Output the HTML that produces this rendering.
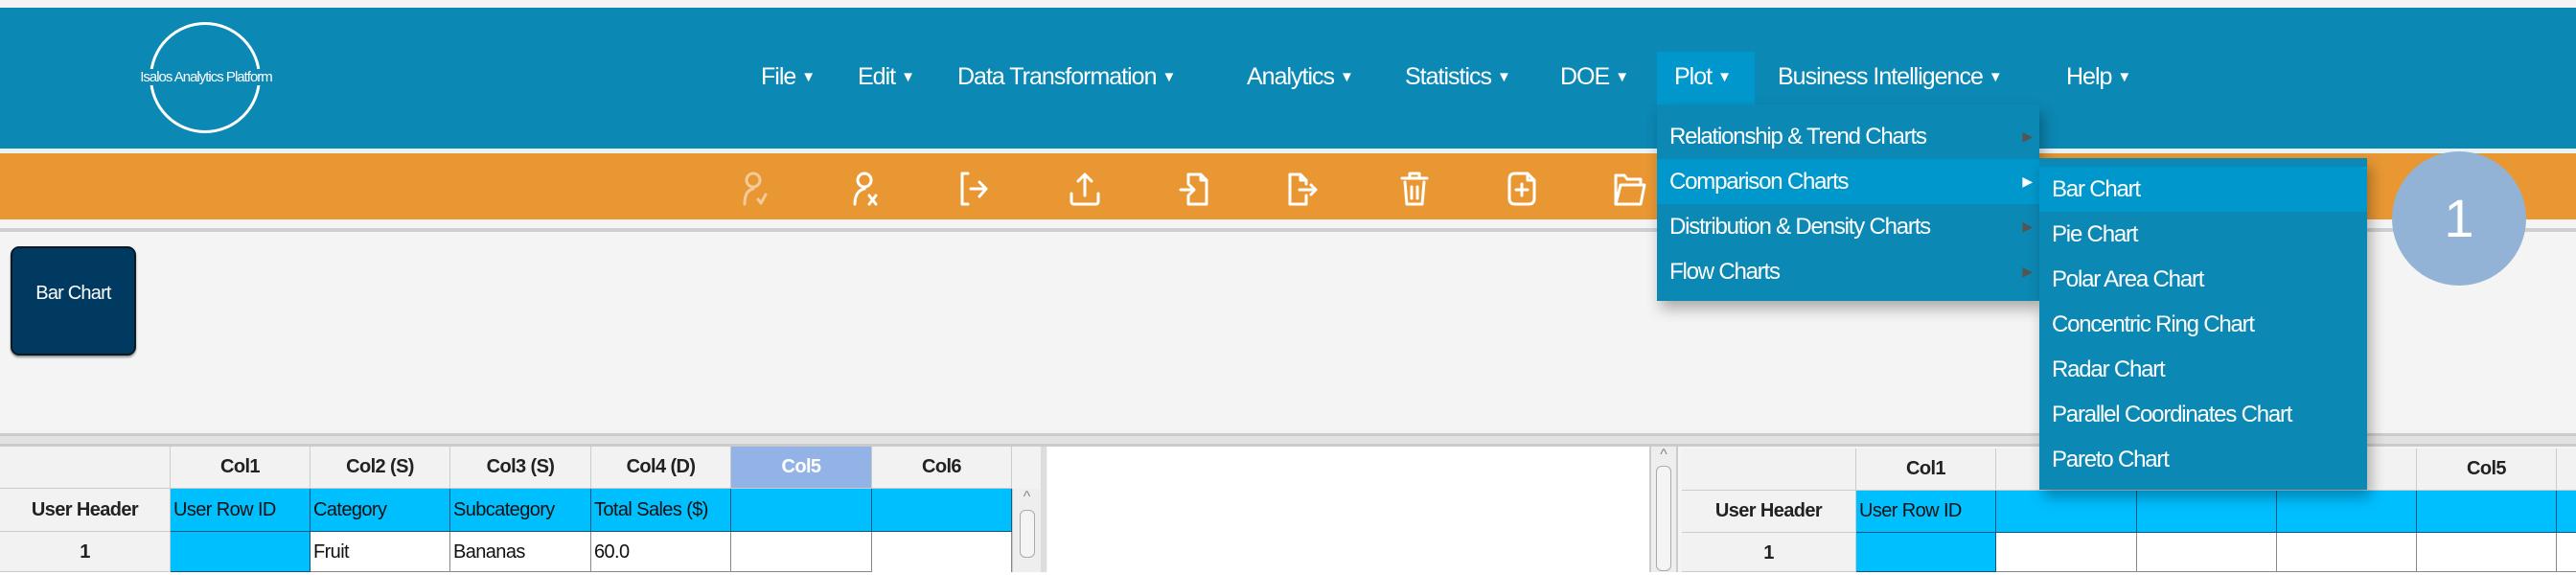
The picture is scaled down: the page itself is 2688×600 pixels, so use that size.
<!DOCTYPE html>
<html><head><meta charset="utf-8"><style>
*{margin:0;padding:0;box-sizing:border-box}
body{width:2688px;height:600px;overflow:hidden;background:#f4f4f4;font-family:"Liberation Sans",sans-serif;position:relative}
.abs{position:absolute}
.hdr{left:0;top:8px;width:2688px;height:147px;background:#0c88b5}
.menu{top:66px;color:#fff;font-size:25px;letter-spacing:-1px;white-space:nowrap}
.menu small{font-size:15px;vertical-align:3px;margin-left:6px}
.orange{left:0;top:160px;width:2688px;height:69px;background:#e89733}
.dd{background:#0c88b5;box-shadow:4px 8px 14px rgba(0,0,0,.3)}
.it{position:absolute;left:0;right:0;height:47px;line-height:47px;color:#fff;font-size:24px;letter-spacing:-1.2px;padding-left:13px;white-space:nowrap}
.it .ar{position:absolute;right:8px;top:0;font-size:14px;color:#555}
.cell{position:absolute;border-right:1px solid #ccc;border-bottom:1px solid #ccc;font-size:20px;letter-spacing:-0.6px;line-height:42px;overflow:hidden;white-space:nowrap}
.h{background:#f2f2f2;text-align:center;font-weight:bold;color:#222}
.c{background:#00bfff;border-color:#0a5a80;color:#111;padding-left:3px}
.w{background:#fff;border-color:#888;color:#111;padding-left:3px}
svg.i{position:absolute;top:178px;width:38px;height:38px;fill:none;stroke:#fff;stroke-width:3;stroke-linecap:round;stroke-linejoin:round}
</style></head><body>
<div class="abs hdr"></div>
<div class="abs" style="left:156px;top:23px;width:116px;height:116px;border:3px solid #fff;border-radius:50%"></div>
<div class="abs" style="left:110px;top:70px;width:210px;text-align:center;color:#fff;font-size:15px;letter-spacing:-1px;line-height:22px"><span style="background:#0c88b5;padding:0 2px">Isalos Analytics Platform</span></div>
<div class="abs" style="left:1729px;top:54px;width:102px;height:55px;background:#0098cc"></div>
<div class="abs menu" style="left:794px">File<small>▼</small></div>
<div class="abs menu" style="left:895px">Edit<small>▼</small></div>
<div class="abs menu" style="left:999px">Data Transformation<small>▼</small></div>
<div class="abs menu" style="left:1301px">Analytics<small>▼</small></div>
<div class="abs menu" style="left:1466px">Statistics<small>▼</small></div>
<div class="abs menu" style="left:1628px">DOE<small>▼</small></div>
<div class="abs menu" style="left:1747px">Plot<small>▼</small></div>
<div class="abs menu" style="left:1855px">Business Intelligence<small>▼</small></div>
<div class="abs menu" style="left:2156px">Help<small>▼</small></div>
<div class="abs" style="left:0;top:155px;width:2688px;height:5px;background:#e8f2f7"></div>
<div class="abs orange"></div>
<div class="abs" style="left:0;top:238px;width:2688px;height:4px;background:#cfcfcf"></div>
<svg class="i" style="left:769px;opacity:.5" viewBox="0 0 38 38"><circle cx="17" cy="10" r="7"/><path d="M8 35 C8 24 12 20 17 19 M22 30 l3 4 l5 -9"/></svg>
<svg class="i" style="left:885px" viewBox="0 0 38 38"><circle cx="17" cy="10" r="7"/><path d="M7 35 C7 24 12 20 17 19 M22 26 l7 9 M29 26 l-7 9"/></svg>
<svg class="i" style="left:997px" viewBox="0 0 38 38"><path d="M13 3 H7 V35 H13 M16 19 H31 M25 12 L32 19 L25 27"/></svg>
<svg class="i" style="left:1113px" viewBox="0 0 38 38"><path d="M19 26 V4 M12 11 L19 4 L26 11 M5 24 V32 Q5 35 8 35 H30 Q33 35 33 32 V24"/></svg>
<svg class="i" style="left:1228px" viewBox="0 0 38 38"><path d="M12 14 V4 H25 L31 10 V35 H12 V26 M25 4 V10 H31 M4 20 H18 M13 15 L18 20 L13 25"/></svg>
<svg class="i" style="left:1341px" viewBox="0 0 38 38"><path d="M22 14 V10 L16 4 H5 V35 H22 V26 M16 4 V10 H22 M15 20 H32 M27 15 L32 20 L27 25"/></svg>
<svg class="i" style="left:1457px" viewBox="0 0 38 38"><path d="M6 8 H32 M14 8 V3 H24 V8 M9 12 L11 35 H27 L29 12 M16 17 V29 M22 17 V29"/></svg>
<svg class="i" style="left:1569px" viewBox="0 0 38 38"><path d="M6 9 Q6 3 12 3 H25 L32 10 V29 Q32 35 26 35 H12 Q6 35 6 29 Z M25 3 V10 H32 M19 14 V26 M13 20 H25"/></svg>
<svg class="i" style="left:1682px" viewBox="0 0 38 38"><path d="M4 35 V5 H13 L16 9 H30 V15 M4 35 L9 15 H34 L30 35 Z"/></svg>
<div class="abs" style="left:11px;top:257px;width:131px;height:114px;background:#003a60;border:2px solid #0a1a25;border-radius:9px;box-shadow:0 2px 2px rgba(0,0,0,.4);color:#fff;font-size:20px;letter-spacing:-0.8px;text-align:center;padding-top:36px">Bar Chart</div>
<div class="abs" style="left:0;top:452px;width:2688px;height:14px;background:#e2e2e2;border-top:3px solid #cbcbcb;border-bottom:3px solid #cbcbcb"></div>
<div class="abs" style="left:0;top:466px;width:1086px;height:134px;background:#f2f2f2"></div>
<div class="cell h" style="left:0;top:466px;width:178px;height:44px"></div>
<div class="cell h" style="left:178px;top:466px;width:146px;height:44px">Col1</div>
<div class="cell h" style="left:324px;top:466px;width:146px;height:44px">Col2 (S)</div>
<div class="cell h" style="left:470px;top:466px;width:147px;height:44px">Col3 (S)</div>
<div class="cell h" style="left:617px;top:466px;width:146px;height:44px">Col4 (D)</div>
<div class="cell h" style="left:763px;top:466px;width:147px;height:44px;background:#93b3e6;color:#fff">Col5</div>
<div class="cell h" style="left:910px;top:466px;width:146px;height:44px">Col6</div>
<div class="cell h" style="left:0;top:510px;width:178px;height:45px;line-height:45px">User Header</div>
<div class="cell c" style="left:178px;top:510px;width:146px;height:45px;line-height:45px">User Row ID</div>
<div class="cell c" style="left:324px;top:510px;width:146px;height:45px;line-height:45px">Category</div>
<div class="cell c" style="left:470px;top:510px;width:147px;height:45px;line-height:45px">Subcategory</div>
<div class="cell c" style="left:617px;top:510px;width:146px;height:45px;line-height:45px">Total Sales ($)</div>
<div class="cell c" style="left:763px;top:510px;width:147px;height:45px"></div>
<div class="cell c" style="left:910px;top:510px;width:146px;height:45px"></div>
<div class="cell h" style="left:0;top:555px;width:178px;height:42px">1</div>
<div class="cell c" style="left:178px;top:555px;width:146px;height:42px"></div>
<div class="cell w" style="left:324px;top:555px;width:146px;height:42px">Fruit</div>
<div class="cell w" style="left:470px;top:555px;width:147px;height:42px">Bananas</div>
<div class="cell w" style="left:617px;top:555px;width:146px;height:42px">60.0</div>
<div class="cell w" style="left:763px;top:555px;width:147px;height:42px"></div>
<div class="cell w" style="left:910px;top:555px;width:146px;height:42px;border-bottom:none"></div>
<div class="abs" style="left:1056px;top:510px;width:30px;height:90px;background:#eee;border-left:1px solid #ccc;color:#888;font-size:16px;text-align:center">^<div style="margin:4px auto;width:16px;height:50px;border:1px solid #aaa;border-radius:6px;background:#f4f4f4"></div></div>
<div class="abs" style="left:1086px;top:466px;width:6px;height:134px;background:#ddd"></div>
<div class="abs" style="left:1093px;top:466px;width:628px;height:131px;background:#fff"></div>
<div class="abs" style="left:1721px;top:466px;width:30px;height:134px;background:#eee;border-left:2px solid #ccc;border-right:2px solid #ccc;color:#888;font-size:16px;text-align:center">^<div style="margin:2px auto;width:16px;height:110px;border:1px solid #aaa;border-radius:6px;background:#f4f4f4"></div></div>
<div class="abs" style="left:1755px;top:468px;width:933px;height:132px;background:#f2f2f2"></div>
<div class="cell h" style="left:1755px;top:468px;width:182px;height:44px"></div>
<div class="cell h" style="left:1937px;top:468px;width:146px;height:44px">Col1</div>
<div class="cell h" style="left:2083px;top:468px;width:147px;height:44px"></div>
<div class="cell h" style="left:2230px;top:468px;width:146px;height:44px"></div>
<div class="cell h" style="left:2376px;top:468px;width:146px;height:44px"></div>
<div class="cell h" style="left:2522px;top:468px;width:146px;height:44px">Col5</div>
<div class="cell h" style="left:2668px;top:468px;width:30px;height:44px"></div>
<div class="cell h" style="left:1755px;top:512px;width:182px;height:44px">User Header</div>
<div class="cell c" style="left:1937px;top:512px;width:146px;height:44px">User Row ID</div>
<div class="cell c" style="left:2083px;top:512px;width:147px;height:44px"></div>
<div class="cell c" style="left:2230px;top:512px;width:146px;height:44px"></div>
<div class="cell c" style="left:2376px;top:512px;width:146px;height:44px"></div>
<div class="cell c" style="left:2522px;top:512px;width:146px;height:44px"></div>
<div class="cell c" style="left:2668px;top:512px;width:30px;height:44px"></div>
<div class="cell h" style="left:1755px;top:556px;width:182px;height:41px">1</div>
<div class="cell c" style="left:1937px;top:556px;width:146px;height:41px"></div>
<div class="cell w" style="left:2083px;top:556px;width:147px;height:41px"></div>
<div class="cell w" style="left:2230px;top:556px;width:146px;height:41px"></div>
<div class="cell w" style="left:2376px;top:556px;width:146px;height:41px"></div>
<div class="cell w" style="left:2522px;top:556px;width:146px;height:41px"></div>
<div class="cell w" style="left:2668px;top:556px;width:30px;height:41px"></div>
<div class="abs" style="left:0;top:597px;width:2688px;height:3px;background:#fff"></div>
<div class="abs dd" style="left:1729px;top:109px;width:399px;height:205px">
<div class="it" style="top:10px">Relationship &amp; Trend Charts<span class="ar">▶</span></div>
<div class="it" style="top:57px;background:#0098cc">Comparison Charts<span class="ar" style="color:#fff">▶</span></div>
<div class="it" style="top:104px">Distribution &amp; Density Charts<span class="ar">▶</span></div>
<div class="it" style="top:151px">Flow Charts<span class="ar">▶</span></div>
</div>
<div class="abs dd" style="left:2128px;top:165px;width:342px;height:346px">
<div class="it" style="top:9px;background:#0098cc">Bar Chart</div>
<div class="it" style="top:56px">Pie Chart</div>
<div class="it" style="top:103px">Polar Area Chart</div>
<div class="it" style="top:150px">Concentric Ring Chart</div>
<div class="it" style="top:197px">Radar Chart</div>
<div class="it" style="top:244px">Parallel Coordinates Chart</div>
<div class="it" style="top:291px">Pareto Chart</div>
</div>
<div class="abs" style="left:2496px;top:158px;width:140px;height:140px;border-radius:50%;background:#93b3d6;color:#fff;font-size:56px;line-height:140px;text-align:center">1</div>
</body></html>
